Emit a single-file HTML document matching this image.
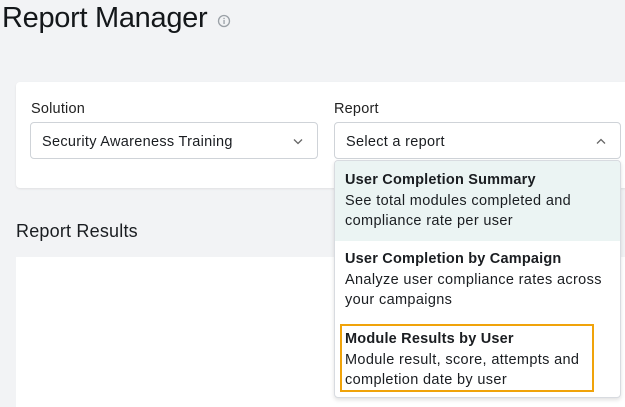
<!DOCTYPE html>
<html><head><style>
*{margin:0;padding:0;box-sizing:border-box}
body{width:625px;height:403px;overflow:hidden;background:#f2f3f5;font-family:"Liberation Sans",sans-serif;color:#1a1d21;position:relative}
.a{position:absolute}
h1{position:absolute;left:2px;top:2px;font-size:29px;font-weight:400;letter-spacing:-0.3px;color:#14171a}
.card{left:16px;top:82px;width:620px;height:106px;background:#fff;border-radius:4px;box-shadow:0 1px 2px rgba(0,0,0,.08)}
.lbl{font-size:14.5px;color:#222;letter-spacing:0.2px}
.sel{height:37px;border:1px solid #cfd3d8;border-radius:4px;background:#fff;font-size:14.5px;padding:0 11px;line-height:38px;letter-spacing:0.3px}
.dd{left:334px;top:160px;width:287px;height:238px;background:#fff;border:1px solid #d8dbe0;border-radius:4px;box-shadow:0 2px 4px rgba(0,0,0,.12);overflow:hidden}
.it{position:absolute;left:0;width:100%;padding:0 10px;font-size:14.5px;line-height:20.5px;letter-spacing:0.35px}
.it b{display:block;font-weight:700;letter-spacing:0.2px}
</style></head><body>
<h1>Report Manager</h1>
<svg class="a" style="left:217px;top:14px" width="14" height="14" viewBox="0 0 14 14"><circle cx="7" cy="7" r="5.5" fill="none" stroke="#9aa0a6" stroke-width="1.3"/><rect x="6.4" y="6" width="1.3" height="4" fill="#9aa0a6"/><rect x="6.4" y="3.8" width="1.3" height="1.3" fill="#9aa0a6"/></svg>
<div class="a card"></div>
<div class="a lbl" style="left:31px;top:101px">Solution</div>
<div class="a lbl" style="left:334px;top:101px">Report</div>
<div class="a sel" style="left:30px;top:122px;width:288px">Security Awareness Training
<svg class="a" style="right:14px;top:15px" width="10" height="7" viewBox="0 0 10 7"><path d="M1 1.5l4 4 4-4" fill="none" stroke="#666" stroke-width="1.3"/></svg></div>
<div class="a sel" style="left:334px;top:122px;width:287px">Select a report
<svg class="a" style="right:14px;top:15px" width="10" height="7" viewBox="0 0 10 7"><path d="M1 5.5l4-4 4 4" fill="none" stroke="#666" stroke-width="1.3"/></svg></div>
<div class="a" style="left:16px;top:221px;font-size:18px;color:#1a1d21;letter-spacing:0.2px">Report Results</div>
<div class="a" style="left:16px;top:257px;width:620px;height:150px;background:#fff"></div>
<div class="a dd">
<div class="it" style="top:0;height:80px;background:#ebf4f3;padding-top:9px"><b>User Completion Summary</b>See total modules completed and compliance rate per user</div>
<div class="it" style="top:80px;padding-top:8px"><b>User Completion by Campaign</b>Analyze user compliance rates across your campaigns</div>
<div class="it" style="top:160px;padding-top:8px"><b>Module Results by User</b>Module result, score, attempts and completion date by user</div>
<div class="a" style="left:5px;top:163px;width:254px;height:68px;border:2px solid #f0a30a"></div>
</div>
</body></html>
